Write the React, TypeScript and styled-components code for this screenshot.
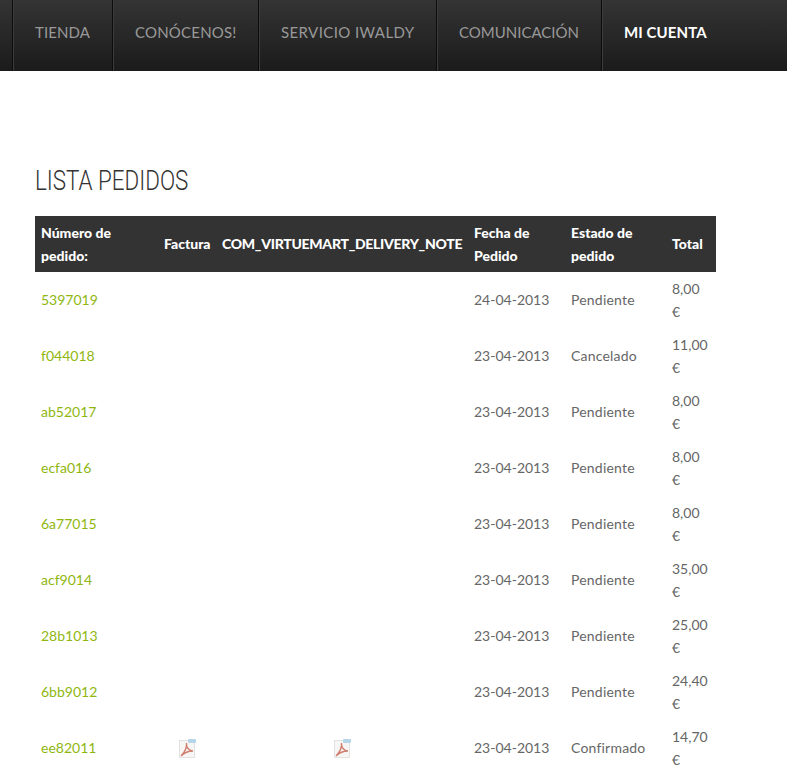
import styled, { createGlobalStyle } from "styled-components";

const Global = createGlobalStyle`
    html, body {
        margin: 0;
        padding: 0;
        background: #fff;
        overflow: hidden;
    }
    body {
        font-family: "Lato", "Noto Sans", sans-serif;
        font-size: 14px;
        color: #666;
    }
`;

const Page = styled.div`
    width: 787px;
    height: 782px;
    overflow: hidden;
`;

const Nav = styled.ul`
    display: flex;
    margin: 0;
    padding: 0 0 0 12px;
    height: 71px;
    list-style: none;
    background: linear-gradient(to bottom, #343434, #1b1b1b);
`;

const NavItem = styled.li<{ $active?: boolean; $width: number; $spacing?: number }>`
    display: flex;
    align-items: center;
    box-sizing: border-box;
    width: ${(p) => p.$width}px;
    height: 71px;
    padding: 0 0 7px 22px;
    border-left: 1px solid #0c0c0c;
    box-shadow: inset 1px 0 0 #3c3c3c;
    font-size: 15px;
    font-weight: ${(p) => (p.$active ? "bold" : "normal")};
    letter-spacing: ${(p) => p.$spacing ?? 0}px;
    color: ${(p) => (p.$active ? "#fff" : "#999")};
    white-space: nowrap;
`;

const Content = styled.div`
    padding: 94px 0 0 35px;
`;

const Heading = styled.h1`
    margin: 0 0 19px;
    height: 32px;
    font-family: "Roboto", sans-serif;
    font-size: 28px;
    font-weight: 300;
    line-height: 32px;
    color: #333;
    white-space: nowrap;
    transform: scaleX(0.8);
    transform-origin: left center;
`;

const Table = styled.table`
    width: 681px;
    table-layout: fixed;
    border-collapse: collapse;
    border-spacing: 0;
`;

const Th = styled.th<{ $nowrap?: boolean; $tight?: boolean }>`
    padding: 0 6px 1px;
    height: 56px;
    box-sizing: border-box;
    background: #333;
    color: #fff;
    font-size: 14px;
    font-weight: 900;
    line-height: 23px;
    letter-spacing: ${(p) => (p.$tight ? "-0.28px" : "0")};
    text-align: left;
    white-space: ${(p) => (p.$nowrap ? "nowrap" : "normal")};
`;

const Td = styled.td`
    padding: 0 6px 2px;
    height: 56px;
    box-sizing: border-box;
    line-height: 23px;
    vertical-align: middle;
`;

const StatusCell = styled(Td)`
    letter-spacing: 0.2px;
`;

const TotalCell = styled(Td)`
    padding-bottom: 0;
`;

const OrderLink = styled.a`
    color: #8fb70f;
    text-decoration: none;
`;

const IconCell = styled(Td)`
    padding-top: 2px;
    padding-bottom: 0;
    text-align: center;
`;

const Pdf = styled.svg`
    display: block;
    margin: 0 auto;
    width: 17px;
    height: 20px;
`;

const Total = styled.span`
    display: block;
    width: 32px;
`;

function PdfIcon() {
  return (
    <Pdf viewBox="0 0 17 20">
      <rect x="0.5" y="1.5" width="15" height="17" fill="#f8f6f5" stroke="#e2e2e2" />
      <path
        d="M2 17 C5 14 8 9 7.5 4 C7 8 10 12 14 12 C10 12 6 13 2 17 Z"
        fill="none"
        stroke="#cf7f70"
        strokeWidth="1.4"
      />
      <rect x="9" y="0" width="8" height="4" rx="1" fill="#b5d6ea" />
    </Pdf>
  );
}

const navItems = [
  { label: "TIENDA", width: 100, spacing: 0.1 },
  { label: "CONÓCENOS!", width: 146, spacing: 0.2 },
  { label: "SERVICIO IWALDY", width: 178, spacing: 0.4 },
  { label: "COMUNICACIÓN", width: 165 },
  { label: "MI CUENTA", width: 185, active: true, spacing: 0.1 },
];

const orders = [
  ["5397019", "24-04-2013", "Pendiente", "8,00"],
  ["f044018", "23-04-2013", "Cancelado", "11,00"],
  ["ab52017", "23-04-2013", "Pendiente", "8,00"],
  ["ecfa016", "23-04-2013", "Pendiente", "8,00"],
  ["6a77015", "23-04-2013", "Pendiente", "8,00"],
  ["acf9014", "23-04-2013", "Pendiente", "35,00"],
  ["28b1013", "23-04-2013", "Pendiente", "25,00"],
  ["6bb9012", "23-04-2013", "Pendiente", "24,40"],
  ["ee82011", "23-04-2013", "Confirmado", "14,70", "pdf"],
];

export default function App() {
  return (
    <Page>
      <Global />
      <Nav>
        {navItems.map((item) => (
          <NavItem key={item.label} $width={item.width} $active={item.active} $spacing={item.spacing}>
            {item.label}
          </NavItem>
        ))}
      </Nav>
      <Content>
        <Heading>LISTA PEDIDOS</Heading>
        <Table>
          <colgroup>
            <col width="123" />
            <col width="58" />
            <col width="252" />
            <col width="97" />
            <col width="101" />
            <col width="50" />
          </colgroup>
          <thead>
            <tr>
              <Th>Número de pedido:</Th>
              <Th $nowrap>Factura</Th>
              <Th $nowrap $tight>COM_VIRTUEMART_DELIVERY_NOTE</Th>
              <Th>Fecha de Pedido</Th>
              <Th>Estado de pedido</Th>
              <Th $nowrap>Total</Th>
            </tr>
          </thead>
          <tbody>
            {orders.map(([id, date, status, total, pdf]) => (
              <tr key={id}>
                <Td><OrderLink href="#">{id}</OrderLink></Td>
                <IconCell>{pdf && <PdfIcon />}</IconCell>
                <IconCell>{pdf && <PdfIcon />}</IconCell>
                <Td>{date}</Td>
                <StatusCell>{status}</StatusCell>
                <TotalCell><Total>{total} €</Total></TotalCell>
              </tr>
            ))}
          </tbody>
        </Table>
      </Content>
    </Page>
  );
}
